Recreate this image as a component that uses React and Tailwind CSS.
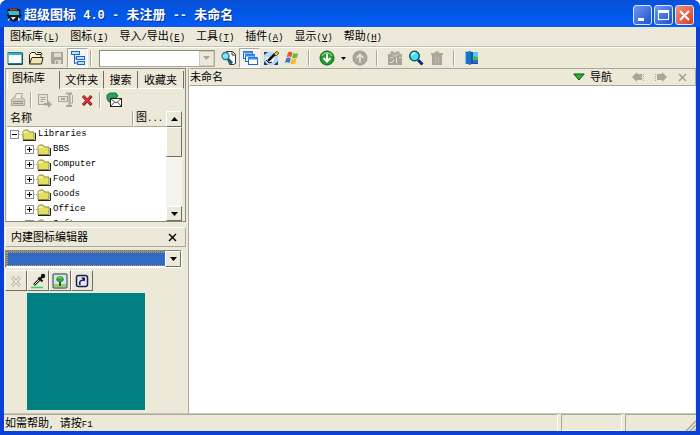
import React from "react";

const G = "#aaa798";

function Svg({ children, size = 16, className = "" }) {
  return (
    <svg width={size} height={size} viewBox="0 0 16 16" fill="none" className={className} aria-hidden="true">
      {children}
    </svg>
  );
}

const NewWindowIcon = () => (
  <Svg>
    <rect x="1" y="2.5" width="14" height="11" fill="#fff" stroke="#1a7f86" />
    <path d="M1.5 4h13" stroke="#27b7bd" strokeWidth="2" />
    <path d="M15.5 3v11.500H1" stroke="#0d5156" />
  </Svg>
);
const OpenIcon = () => (
  <Svg>
    <path d="M1.500 13V4.500l2-2h3.500l1 2h5V13" fill="#fff7c4" stroke="#222" />
    <path d="M9 2.500h4l1 2" stroke="#222" />
    <path d="M1.500 14L4 7.500h11L13.500 14z" fill="#f6e3ae" stroke="#222" />
  </Svg>
);
const SaveIcon = () => (
  <Svg>
    <path d="M2 2h12v12H3l-1-1z" fill={G} />
    <path d="M5 3h7v4H5zM6 10h6v4H6z" fill="#dedac9" />
    <path d="M7 11h2v3H7z" fill={G} />
  </Svg>
);
const TreeIcon = () => (
  <Svg>
    <path d="M4.500 5v9M4.500 8h3M4.500 13h3" stroke="#1560c8" />
    <rect x="1.500" y="1.500" width="8" height="3" fill="#bfe0ff" stroke="#1668d8" />
    <rect x="6.500" y="6.500" width="8" height="3" fill="#bfe0ff" stroke="#1668d8" />
    <rect x="7.500" y="11.500" width="7" height="3" fill="#bfe0ff" stroke="#1668d8" />
  </Svg>
);
const FindDocIcon = () => (
  <Svg>
    <path d="M5.500 1.500h6l3 3v9l-2 1h-4z" fill="#fff" stroke="#333" />
    <path d="M11 1.500v3.500h3.500" stroke="#333" />
    <path d="M6 8l5 5.500" stroke="#1b5674" strokeWidth="2.800" />
    <circle cx="4.500" cy="6" r="3.500" fill="#8ee4f4" stroke="#26789c" strokeWidth="1.300" />
  </Svg>
);
const CascadeIcon = () => (
  <Svg>
    <rect x="1.500" y="1.500" width="9" height="7" fill="#fff" stroke="#1668d8" />
    <path d="M1 2.500h10" stroke="#3b8cf0" strokeWidth="2" />
    <rect x="3.500" y="4.500" width="9" height="7" fill="#fff" stroke="#1668d8" />
    <path d="M3 5.500h10" stroke="#3b8cf0" strokeWidth="2" />
    <rect x="6.500" y="7.500" width="9" height="7" fill="#fff" stroke="#1668d8" />
    <path d="M6 8.500h10" stroke="#3b8cf0" strokeWidth="2" />
  </Svg>
);
const EditIcon = () => (
  <Svg>
    <rect x="1" y="2" width="14" height="13" fill="#123c96" />
    <path d="M1 5l4-3h7l3 2v7l-4 4H5l-4-4z" fill="#b7d9ef" />
    <path d="M3 7l5 1 4-2-2 6-6 1z" fill="#fff" />
    <path d="M5 11L12 4" stroke="#111" strokeWidth="2.500" />
    <path d="M11 4l3-3 2 2-3 3z" fill="#e7b72e" stroke="#222" strokeWidth=".6" />
    <path d="M3 10l3 3 3-1" stroke="#111" />
  </Svg>
);
const WinIcon = () => (
  <Svg>
    <path d="M4 2.500q2.500-1.500 4.500 0L7.200 7.200Q5 5.800 2.600 7.200z" fill="#ea5628" />
    <path d="M9.300 3q2.200 1.300 5 0l-1.400 4.700q-2.500 1.300-4.800 0z" fill="#71b62f" />
    <path d="M2.300 8.200q2.300-1.400 4.500 0L5.500 13q-2.200-1.400-4.600 0z" fill="#3975d8" />
    <path d="M7.700 8.700q2.300 1.300 4.900 0l-1.400 4.800q-2.500 1.300-4.800 0z" fill="#f2ba20" />
  </Svg>
);
const DownCircleIcon = () => (
  <Svg>
    <circle cx="8" cy="8" r="7" fill="#27992c" stroke="#116419" />
    <path d="M3 6a5.500 5.500 0 0 1 10 0" stroke="#78cf6f" strokeWidth="1.500" />
    <path d="M8 3.500v8M4.500 8L8 11.500 11.500 8" stroke="#fff" strokeWidth="2" />
  </Svg>
);
const UpCircleIcon = () => (
  <Svg>
    <circle cx="8" cy="8" r="7" fill={G} stroke="#9b988b" />
    <path d="M8 12.500v-8M4.500 8L8 4.500 11.500 8" stroke="#e8e4d5" strokeWidth="1.700" />
  </Svg>
);
const GiftIcon = () => (
  <Svg>
    <path d="M1 4h3L3 2l3-1 2 2 2-2 3 1-1 2h3v11H1z" fill={G} />
    <path d="M6 4.500l2 2 3-2.500M4 7.500h2M9.500 8v5M12 7.500h2M3 12.500h2l2-2.500" stroke="#ece9d8" />
  </Svg>
);
const MagnifierIcon = () => (
  <Svg>
    <path d="M10 10l4.500 4.500" stroke="#14218a" strokeWidth="3" />
    <circle cx="6.500" cy="6" r="4.800" fill="#39e6ee" stroke="#123f4c" strokeWidth="1.300" />
    <path d="M4 5.500a3 3 0 0 1 3-2.500" stroke="#d8ffff" strokeWidth="1.500" />
  </Svg>
);
const TrashIcon = () => (
  <Svg>
    <path d="M2 3h4V1.500h4V3h4v2H2zM3 5h10v10H3z" fill={G} />
    <path d="M6.500 7v6M9.500 7v6" stroke="#c0bdae" />
  </Svg>
);
const DoorIcon = () => (
  <Svg>
    <path d="M7 2h7v12H7z" fill="#1b4fa8" />
    <path d="M9 2h5v5H9z" fill="#58c8ee" />
    <path d="M9 10h5v3H9z" fill="#3565c4" />
    <path d="M1 2l6-1v14l-6-1.500z" fill="#1d6fd0" />
    <path d="M8 8.500l3-3V7h3v3h-3v1.500z" fill="#43b849" />
    <path d="M1.500 2.500v11" stroke="#7cc8f5" />
  </Svg>
);
const PrintIcon = () => (
  <Svg>
    <path d="M1.500 13.500V7.500l2-2h9l2 2v6z" fill="#cfccbc" stroke={G} />
    <path d="M4.500 6l2-4.500h6L11 6" fill="#f1eee1" stroke={G} />
    <path d="M3 9.500h10M3 11.500h10" stroke="#9b988a" />
  </Svg>
);
const ExportIcon = () => (
  <Svg>
    <rect x="1.500" y="2.500" width="9" height="10" fill="#e6e3d4" stroke={G} />
    <path d="M3.500 5.500h5M3.500 7.500h5M3.500 9.500h3" stroke={G} />
    <path d="M7 11h4V8.500l4 4-4 3.500v-2.500H7z" fill={G} />
  </Svg>
);
const RenameIcon = () => (
  <Svg>
    <rect x=".5" y="4.500" width="9" height="5" fill="#e3e0d1" stroke={G} />
    <path d="M3 7h4" stroke={G} strokeWidth="2" />
    <path d="M8 1.500h6M11.500 2v12M8 14h6" stroke={G} strokeWidth="2" />
    <path d="M14.500 3v8h-2" stroke={G} />
  </Svg>
);
const RedXIcon = () => (
  <Svg>
    <path d="M4 4l8.500 9M12.500 4L4 13" stroke="#6d1717" strokeWidth="3" />
    <path d="M4 4l8 8.500M12 4l-8 8.500" stroke="#e2343a" strokeWidth="1.800" />
  </Svg>
);
const MailIcon = () => (
  <Svg>
    <path d="M1 7V3l3-2h6l2 3-2 2H5v4H3z" fill="#27a25a" stroke="#14713b" />
    <rect x="4.500" y="6.500" width="11" height="8" fill="#fff" stroke="#222" />
    <path d="M4.500 6.500L10 11l5.500-4.500M4.500 14.500L8.500 10M15.500 14.500l-4-4.500" stroke="#222" strokeWidth=".8" />
  </Svg>
);
const FolderIcon = () => (
  <svg width="14" height="12" viewBox="0 0 14 12" fill="none" className="shrink-0" aria-hidden="true">
    <path d="M1 10.500V2.500L2.500 1H6l1.500 2H12v7.500z" fill="#e2df62" stroke="#8c8a3e" />
    <path d="M2 4.500V3h4" stroke="#fdfcc5" />
    <path d="M1 11.500h12.500V4" stroke="#222" />
  </svg>
);
const CrossIcon = ({ color }) => (
  <svg width="9" height="9" viewBox="0 0 9 9" fill="none" aria-hidden="true">
    <path d="M1 1l7 7M8 1L1 8" stroke={color} strokeWidth="1.400" />
  </svg>
);
const Caret = ({ color = "#000", up = false, small = false }) => (
  <svg width={small ? 5 : 7} height={small ? 3 : 4} viewBox="0 0 7 4" aria-hidden="true">
    <path d={up ? "M0 4h7L3.500 0z" : "M0 0h7L3.500 4z"} fill={color} />
  </svg>
);

const En = ({ children }) => (
  <span className="font-['Liberation_Mono',monospace] text-[9px]">{children}</span>
);

function ToolButton({ label, pressed, disabled, children }) {
  return (
    <button
      type="button"
      aria-label={label}
      disabled={disabled}
      className={
        pressed
          ? "flex h-5 w-[21px] shrink-0 items-center justify-center border border-t-[#aca899] border-l-[#aca899] border-r-white border-b-white bg-[#f6f4ec]"
          : "flex h-5 w-[21px] shrink-0 items-center justify-center"
      }
    >
      {children}
    </button>
  );
}

const Separator = ({ narrow }) => (
  <div className={narrow ? "flex h-4 w-[6px] shrink-0 justify-center" : "flex h-4 w-[14px] shrink-0 justify-center"}>
    <div className="w-px bg-[#aca899]" />
    <div className="w-px bg-white" />
  </div>
);

const raised =
  "flex shrink-0 items-center justify-center border border-t-white border-l-white border-r-[#716f64] border-b-[#716f64] bg-[#ece9d8]";

function TitleBar() {
  const box = "flex h-5 w-[19px] items-center justify-center rounded-[3px] border border-[#dbe6ff]";
  return (
    <header className="flex h-[27px] shrink-0 items-center bg-linear-to-b from-[#0a4fd6] via-[#0058e8] to-[#0a5af5] pt-[3px] pr-[6px] pl-[6px]">
      <Svg>
        <path d="M1 3l4-2h6l4 2-1 3 2 3-2 1 1 4-3-1-4 2-4-2-3 1 1-4-1-2 1-2z" fill="#111827" />
        <path d="M2 4h11v4H3z" fill="#2cc4c9" />
        <path d="M4 1.500h7v2H4z" fill="#b33a32" />
        <path d="M5 10h5l-3 3zM1 13l3-2-1 3zM12 10l3 3-3 1z" fill="#e5e7eb" />
      </Svg>
      <h1 className="ml-[2px] grow whitespace-pre text-[13px] leading-5 font-bold text-white [text-shadow:1px_1px_0_#0a2f8c]">
        超级图标<span className="font-['Liberation_Mono',monospace] text-[12px]"> 4.0 - </span>未注册
        <span className="font-['Liberation_Mono',monospace] text-[12px]"> -- </span>未命名
      </h1>
      <div className="flex gap-[2px]">
        <button type="button" aria-label="最小化" className={`${box} bg-linear-to-br from-[#6f97f2] to-[#1f4fd0]`}>
          <span className="mt-2 mr-1 h-[3px] w-[6px] bg-white" />
        </button>
        <button type="button" aria-label="最大化" className={`${box} bg-linear-to-br from-[#6f97f2] to-[#1f4fd0]`}>
          <span className="h-[10px] w-[11px] border border-t-[3px] border-white" />
        </button>
        <button type="button" aria-label="关闭" className={`${box} bg-linear-to-br from-[#f0907a] to-[#d8391a]`}>
          <svg width="11" height="11" viewBox="0 0 11 11" aria-hidden="true">
            <path d="M1 1l9 9M10 1l-9 9" stroke="#fff" strokeWidth="2" />
          </svg>
        </button>
      </div>
    </header>
  );
}

const menus = [
  ["图标库", "L"],
  ["图标", "I"],
  ["导入/导出", "E"],
  ["工具", "T"],
  ["插件", "A"],
  ["显示", "V"],
  ["帮助", "H"],
];

function MenuBar() {
  return (
    <nav className="flex h-5 shrink-0 items-center gap-[11px] border-b border-[#c5c2b2] pl-[6px]">
      {menus.map(([name, key]) => (
        <button key={key} type="button" className="whitespace-nowrap">
          {name.includes("/") ? (
            <>
              导入<En>/</En>导出
            </>
          ) : (
            name
          )}
          <En>
            (<span className="underline">{key}</span>)
          </En>
        </button>
      ))}
    </nav>
  );
}

function MainToolbar() {
  return (
    <div className="flex h-[21px] shrink-0 items-center border-t border-white">
      <ToolButton label="新建"><NewWindowIcon /></ToolButton>
      <ToolButton label="打开"><OpenIcon /></ToolButton>
      <ToolButton label="保存" disabled><SaveIcon /></ToolButton>
      <ToolButton label="树形视图" pressed><TreeIcon /></ToolButton>
      <Separator narrow />
      <div className="relative mr-[3px] ml-[5px] flex w-[116px] shrink-0">
        <select aria-label="地址" className="h-[17px] w-full appearance-none border border-t-[#8b887b] border-l-[#8b887b] border-r-[#aca899] border-b-[#aca899] bg-white" />
        <span className="pointer-events-none absolute top-px right-px flex h-[15px] w-[15px] items-center justify-center border border-[#d0cdbd] bg-[#ece9d8]">
          <Caret color={G} />
        </span>
      </div>
      <ToolButton label="查找图标"><FindDocIcon /></ToolButton>
      <ToolButton label="层叠窗口" pressed><CascadeIcon /></ToolButton>
      <ToolButton label="编辑"><EditIcon /></ToolButton>
      <ToolButton label="系统图标"><WinIcon /></ToolButton>
      <Separator />
      <ToolButton label="下载"><DownCircleIcon /></ToolButton>
      <button type="button" aria-label="下载选项" className="flex h-5 w-[12px] shrink-0 items-center justify-center">
        <Caret small />
      </button>
      <ToolButton label="上传" disabled><UpCircleIcon /></ToolButton>
      <Separator />
      <ToolButton label="属性" disabled><GiftIcon /></ToolButton>
      <ToolButton label="搜索"><MagnifierIcon /></ToolButton>
      <ToolButton label="删除" disabled><TrashIcon /></ToolButton>
      <Separator />
      <ToolButton label="退出"><DoorIcon /></ToolButton>
    </div>
  );
}

function TreeRow({ name, root }) {
  return (
    <li className={root ? "flex h-[15px] items-center pl-[3px]" : "flex h-[15px] items-center pl-[18px]"}>
      <button type="button" aria-label={name} className="flex h-[9px] w-[9px] shrink-0 items-center justify-center border border-[#8f8f8f] bg-white">
        <svg width="5" height="5" viewBox="0 0 5 5" aria-hidden="true">
          <path d={root ? "M0 2.500h5" : "M0 2.500h5M2.500 0v5"} stroke="#000" />
        </svg>
      </button>
      <span className="w-[3px] border-t border-dotted border-[#aaa]" />
      <FolderIcon />
      <span className="ml-[2px] font-['Liberation_Mono',monospace] text-[9px] leading-[15px]">{name}</span>
    </li>
  );
}

function LibraryPanel() {
  const tab = "flex h-[18px] basis-0 items-center whitespace-nowrap border-r border-[#716f64]";
  return (
    <section className="flex h-[154px] shrink-0 flex-col border border-t-[#8b887b] border-l-[#aca899] border-r-[#8b887b] border-b-[#8b887b] px-px">
      <div role="tablist" className="flex h-5 shrink-0 items-end">
        <button role="tab" aria-selected="true" type="button" className={`${tab} h-5 grow-[49] border-l border-l-white pb-1 pl-1`}>图标库</button>
        <button role="tab" aria-selected="false" type="button" className={`${tab} grow-[45] justify-center border-b border-b-white`}>文件夹</button>
        <button role="tab" aria-selected="false" type="button" className={`${tab} grow-[34] justify-center border-b border-b-white`}>搜索</button>
        <button role="tab" aria-selected="false" type="button" className={`${tab} grow-[47] justify-center border-b border-b-white`}>收藏夹</button>
      </div>
      <div className="flex h-[22px] shrink-0 items-center">
        <ToolButton label="打印" disabled><PrintIcon /></ToolButton>
        <Separator narrow />
        <ToolButton label="导出" disabled><ExportIcon /></ToolButton>
        <ToolButton label="重命名" disabled><RenameIcon /></ToolButton>
        <ToolButton label="删除"><RedXIcon /></ToolButton>
        <Separator narrow />
        <ToolButton label="发送"><MailIcon /></ToolButton>
      </div>
      <div className="flex min-h-0 grow">
        <div className="flex min-w-0 grow flex-col overflow-hidden bg-white">
          <div className="flex h-[16px] shrink-0 items-center border-b border-[#aca899] bg-[#ece9d8] leading-[15px]">
            <span className="grow border-r border-[#aca899] pl-[3px]">名称</span>
            <span className="w-[33px] shrink-0 border-l border-white pl-[2px]">图<En>...</En></span>
          </div>
          <ul className="min-h-0 grow overflow-hidden">
            <TreeRow name="Libraries" root />
            <TreeRow name="BBS" />
            <TreeRow name="Computer" />
            <TreeRow name="Food" />
            <TreeRow name="Goods" />
            <TreeRow name="Office" />
            <TreeRow name="Software" />
          </ul>
        </div>
        <div className="mr-[2px] flex w-[16px] shrink-0 flex-col bg-[#f6f4ee]">
          <button type="button" aria-label="向上滚动" className={`${raised} h-[16px]`}><Caret up /></button>
          <div className={`${raised} h-[30px]`} />
          <div className="grow" />
          <button type="button" aria-label="向下滚动" className={`${raised} h-[15px]`}><Caret /></button>
        </div>
      </div>
    </section>
  );
}

function EditorPanel() {
  const btn = `${raised} h-[21px] w-[22px]`;
  return (
    <section className="mt-[5px] flex grow flex-col">
      <div className="flex h-[20px] shrink-0 items-center justify-between border border-t-white border-l-white border-r-[#aca899] border-b-[#aca899] pr-2 pl-[5px]">
        <h2>内建图标编辑器</h2>
        <button type="button" aria-label="关闭编辑器"><CrossIcon color="#000" /></button>
      </div>
      <div className="relative mt-[3px] mr-1 flex shrink-0">
        <select aria-label="图标格式" className="h-[18px] w-full appearance-none border-2 border-t-[#8b887b] border-l-[#8b887b] border-r-white border-b-white bg-[#316ac5] outline outline-dotted outline-offset-[-3px] outline-[#d99c3a]" />
        <span className={`${raised} pointer-events-none absolute top-px right-px h-4 w-4`}><Caret /></span>
      </div>
      <div className="mt-[2px] flex shrink-0">
        <button type="button" aria-label="清除" disabled className={btn}>
          <Svg><path d="M4 4l8 9M12 4l-8 9" stroke={G} strokeWidth="3" /><path d="M4 4l8 9M12 4l-8 9" stroke="#efecdf" strokeWidth="1.500" /></Svg>
        </button>
        <button type="button" aria-label="取色" className={btn}>
          <Svg>
            <path d="M1 14.500h12" stroke="#39d353" strokeWidth="1.500" />
            <path d="M4 12l6-6" stroke="#222" strokeWidth="2.500" />
            <path d="M4.500 11.500L9 7" stroke="#fff" />
            <path d="M8.500 4.500l4 4M10 6l3-3" stroke="#111" strokeWidth="2" />
            <circle cx="13" cy="3" r="2.200" fill="#111" />
          </Svg>
        </button>
        <button type="button" aria-label="图片" className={btn}>
          <Svg>
            <rect x="1" y="1" width="14" height="14" rx="1" fill="#c9ebf5" stroke="#333" />
            <path d="M2 11h12v3H2z" fill="#8fd06a" />
            <path d="M8 8v5" stroke="#6b3e1c" strokeWidth="2" />
            <path d="M4 7l1-3 3-1 3 1 1 3-2 2H6z" fill="#3f9f33" />
            <path d="M6 5l2-1 1 2" stroke="#a8df57" />
          </Svg>
        </button>
        <button type="button" aria-label="快捷方式" className={btn}>
          <Svg>
            <rect x="2.500" y="2.500" width="11" height="11" rx="2" fill="#e4e6fa" stroke="#1b1e50" strokeWidth="1.500" />
            <path d="M6 12c-1-3 0-5 4-5" stroke="#15184a" strokeWidth="1.500" />
            <path d="M7 4.500h4v4z" fill="#15184a" />
          </Svg>
        </button>
      </div>
      <div className="mt-[2px] ml-[22px] h-[117px] w-[118px] bg-[#008080]" />
    </section>
  );
}

function DocumentPane() {
  return (
    <main className="flex min-w-0 grow flex-col border-l border-[#aca899]">
      <div className="flex h-[18px] shrink-0 items-center border border-t-[#aca899] border-l-white border-r-[#aca899] border-b-[#aca899] pr-2">
        <h2 className="grow">未命名</h2>
        <button type="button" className="mr-5 flex items-center gap-[5px]">
          <svg width="12" height="8" viewBox="0 0 12 8" aria-hidden="true">
            <path d="M.8 1h10.400L6 7z" fill="#2cb52c" stroke="#0b4d12" />
          </svg>
          导航
        </button>
        <div className="flex items-center gap-[11px]">
          <button type="button" aria-label="后退" disabled>
            <svg width="12" height="10" viewBox="0 0 12 10" aria-hidden="true"><path d="M0 5l5-5v2h5v6H5v2z" fill={G} /><path d="M11.500 2v7" stroke={G} strokeDasharray="1 1" /></svg>
          </button>
          <button type="button" aria-label="前进" disabled>
            <svg width="12" height="10" viewBox="0 0 12 10" aria-hidden="true"><path d="M12 5L7 0v2H2v6h5v2z" fill={G} /><path d="M.5 2v7" stroke={G} strokeDasharray="1 1" /></svg>
          </button>
          <button type="button" aria-label="关闭文档" disabled><CrossIcon color="#a09d90" /></button>
        </div>
      </div>
      <div className="grow border-r border-[#ece9d8] bg-white" />
    </main>
  );
}

function StatusBar() {
  return (
    <footer className="flex h-[18px] shrink-0 gap-[3px] border-t border-[#c9c6b7] leading-4">
      <div className="grow border-t border-r border-t-[#aca899] border-r-white pl-px">
        如需帮助<En>, </En>请按<En>F1</En>
      </div>
      <div className="w-[61px] border border-t-[#aca899] border-l-[#aca899] border-r-white border-b-white" />
      <div className="flex w-[71px] items-end justify-end border-t border-l border-[#aca899]">
        <svg width="11" height="11" viewBox="0 0 11 11" aria-hidden="true">
          <path d="M1 11L11 1M5 11l6-6M9 11l2-2" stroke="#aca899" strokeWidth="1.500" />
        </svg>
      </div>
    </footer>
  );
}

export default function App() {
  return (
    <div className="flex h-screen w-full flex-col overflow-hidden rounded-t-[7px] bg-[#0a3fd8] font-['Liberation_Sans','Noto_Sans_CJK_SC',sans-serif] text-[11px] leading-4 text-black">
      <TitleBar />
      <div className="mx-1 mb-1 flex min-h-0 grow flex-col bg-[#ece9d8]">
        <MenuBar />
        <MainToolbar />
        <div className="flex min-h-0 grow">
          <aside className="mr-[2px] ml-px flex w-[181px] shrink-0 flex-col">
            <LibraryPanel />
            <EditorPanel />
          </aside>
          <DocumentPane />
        </div>
        <StatusBar />
      </div>
    </div>
  );
}
